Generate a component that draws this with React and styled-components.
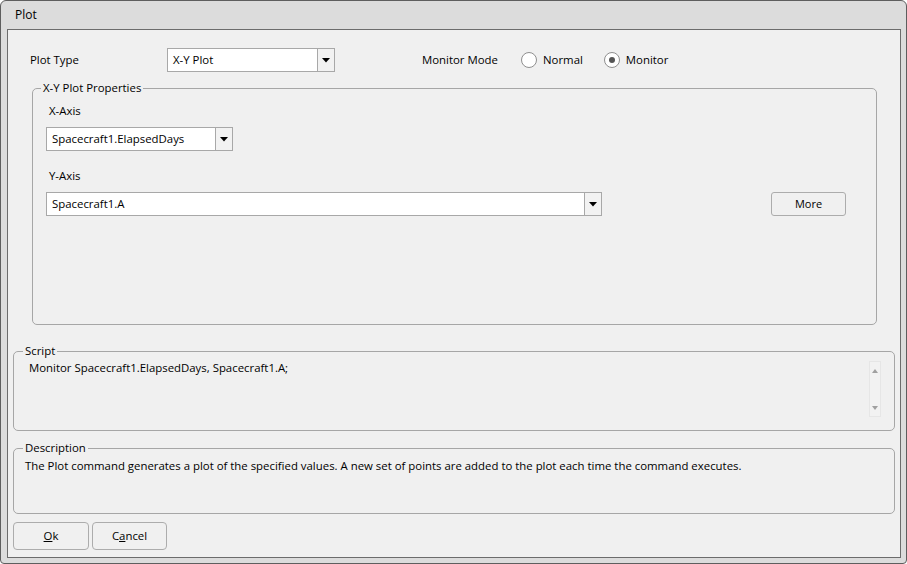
import React, { useState } from 'react'
import styled, { createGlobalStyle } from 'styled-components'

const Global = createGlobalStyle`
  html, body {
    margin: 0;
    padding: 0;
    background: #ffffff;
  }
  body {
    font-family: "Open Sans", "Noto Sans", sans-serif;
    font-size: 11.4px;
    color: #000;
  }
`

const App = () => {
  const [mode, setMode] = useState('monitor')

  return (
    <>
      <Global />
      <Window>
        <TitleBar>Plot</TitleBar>
        <Content>
          <TopRow>
            <RowLabel>Plot Type</RowLabel>
            <Combo width={168} value="X-Y Plot" />
            <ModeLabel>Monitor Mode</ModeLabel>
            <RadioOption label="Normal" checked={mode === 'normal'} onClick={() => setMode('normal')} />
            <RadioOption label="Monitor" checked={mode === 'monitor'} onClick={() => setMode('monitor')} />
          </TopRow>

          <PropsGroup>
            <Legend>X-Y Plot Properties</Legend>
            <PropsBody>
              <AxisLabel>X-Axis</AxisLabel>
              <Combo width={187} value="Spacecraft1.ElapsedDays" />
              <AxisLabel spaced>Y-Axis</AxisLabel>
              <AxisRow>
                <Combo width={556} value="Spacecraft1.A" />
                <MoreButton>More</MoreButton>
              </AxisRow>
            </PropsBody>
          </PropsGroup>

          <WideGroup top={18}>
            <Legend>Script</Legend>
            <ScriptBody>
              <ScriptText>Monitor Spacecraft1.ElapsedDays, Spacecraft1.A;</ScriptText>
              <Scrollbar>
                <ScrollArrow up />
                <ScrollArrow />
              </Scrollbar>
            </ScriptBody>
          </WideGroup>

          <WideGroup top={9}>
            <Legend>Description</Legend>
            <DescBody>
              The Plot command generates a plot of the specified values. A new set of points are added to the plot each time the command executes.
            </DescBody>
          </WideGroup>

          <ButtonRow>
            <DialogButton width={76}><u>O</u>k</DialogButton>
            <DialogButton width={75}>C<u>a</u>ncel</DialogButton>
          </ButtonRow>
        </Content>
      </Window>
    </>
  )
}

const Combo = ({ width, value }) => (
  <ComboBox width={width}>
    <ComboText>{value}</ComboText>
    <ComboArrow>
      <svg width="8" height="5" viewBox="0 0 8 5"><path d="M0 0 L8 0 L4 4.5 Z" fill="#000" /></svg>
    </ComboArrow>
  </ComboBox>
)

const RadioOption = ({ label, checked, onClick }) => (
  <Radio onClick={onClick}>
    <RadioCircle>{checked && <RadioDot />}</RadioCircle>
    <span>{label}</span>
  </Radio>
)

export default App

const Window = styled.div`
  width: 907px;
  height: 564px;
  box-sizing: border-box;
  border: 1px solid #5e5e5e;
  border-radius: 6px 6px 4px 4px;
  background: #dcdcdc;
  display: flex;
  flex-direction: column;
  overflow: hidden;
`

const TitleBar = styled.div`
  height: 28px;
  line-height: 28px;
  padding-left: 14px;
  font-size: 12px;
  color: #000;
`

const Content = styled.div`
  margin: 0 5px 5px 6px;
  flex: 1;
  border: 1px solid #6c6c6c;
  background: #f0f0f0;
  display: flex;
  flex-direction: column;
  padding: 0 5px;
`

const TopRow = styled.div`
  display: flex;
  align-items: center;
  height: 24px;
  margin-top: 18px;
  line-height: 15px;
`

const RowLabel = styled.div`
  width: 154px;
  padding-left: 17px;
  box-sizing: border-box;
  flex-shrink: 0;
  margin-top: -1px;
`

const ModeLabel = styled.div`
  margin-left: 87px;
  width: 99px;
  margin-top: -1px;
`

const Radio = styled.div`
  display: flex;
  align-items: center;
  cursor: default;
  gap: 6px;
  margin-right: 21px;
  &:last-child { margin-right: 0; }
  span { margin-top: -1px; }
`

const RadioCircle = styled.div`
  width: 16px;
  height: 16px;
  box-sizing: border-box;
  border-radius: 50%;
  border: 1px solid #8f8f8f;
  background: #fff;
  display: flex;
  align-items: center;
  justify-content: center;
`

const RadioDot = styled.div`
  width: 6px;
  height: 6px;
  border-radius: 50%;
  background: #555;
`

const ComboBox = styled.div`
  width: ${p => p.width}px;
  height: 24px;
  box-sizing: border-box;
  border: 1px solid #a8a8a8;
  background: #fff;
  display: flex;
  flex-shrink: 0;
`

const ComboText = styled.div`
  flex: 1;
  padding-left: 5px;
  line-height: 21px;
  white-space: nowrap;
  overflow: hidden;
`

const ComboArrow = styled.div`
  width: 16px;
  border-left: 1px solid #a8a8a8;
  background: #f2f2f2;
  display: flex;
  align-items: center;
  justify-content: center;
`

const Fieldset = styled.fieldset`
  margin: 0;
  padding: 0;
  border: 1px solid #a6a6a6;
  border-radius: 5px;
  min-width: 0;
`

const Legend = styled.legend`
  padding: 0 2px;
  margin-left: 8px;
  line-height: 16px;
  font-size: 11.4px;
`

const PropsGroup = styled(Fieldset)`
  margin: 8px 18px 0 19px;
`

const PropsBody = styled.div`
  padding: 7px 0 0 13px;
  height: 228px;
  box-sizing: border-box;
`

const AxisLabel = styled.div`
  line-height: 16px;
  margin: ${p => (p.spaced ? '17px' : '0')} 0 8px 3px;
`

const AxisRow = styled.div`
  display: flex;
  align-items: center;
`

const MoreButton = styled.button`
  margin-left: 169px;
  width: 75px;
  height: 24px;
  border: 1px solid #acacac;
  border-radius: 3px;
  background: #f0f0f0;
  font-family: inherit;
  font-size: 11px;
  color: #000;
  padding: 0 0 1px;
`

const WideGroup = styled(Fieldset)`
  margin: ${p => p.top}px 0 0 0;
  & > legend { margin-left: 9px; }
`

const ScriptBody = styled.div`
  height: 70px;
  display: flex;
  padding: 1px 13px 0 15px;
`

const ScriptText = styled.div`
  flex: 1;
  line-height: 16px;
`

const Scrollbar = styled.div`
  width: 12px;
  height: 56px;
  margin-top: 1px;
  box-sizing: border-box;
  border: 1px solid #e6e6e6;
  background: #f2f2f2;
  display: flex;
  flex-direction: column;
  justify-content: space-between;
  align-items: center;
  padding: 7px 0 6px;
`

const ScrollArrow = styled.div`
  width: 0;
  height: 0;
  border-left: 3px solid transparent;
  border-right: 3px solid transparent;
  ${p => (p.up ? 'border-bottom: 4px solid #a0a0a0;' : 'border-top: 4px solid #a0a0a0;')}
`

const DescBody = styled.div`
  height: 57px;
  box-sizing: border-box;
  padding: 2px 0 0 11px;
  line-height: 16px;
`

const ButtonRow = styled.div`
  display: flex;
  gap: 3px;
  margin-top: 8px;
`

const DialogButton = styled.button`
  width: ${p => p.width}px;
  height: 28px;
  border: 1px solid #acacac;
  border-radius: 4px;
  background: #f0f0f0;
  font-family: inherit;
  font-size: 11.4px;
  color: #000;
  padding: 0 0 1px;
`
